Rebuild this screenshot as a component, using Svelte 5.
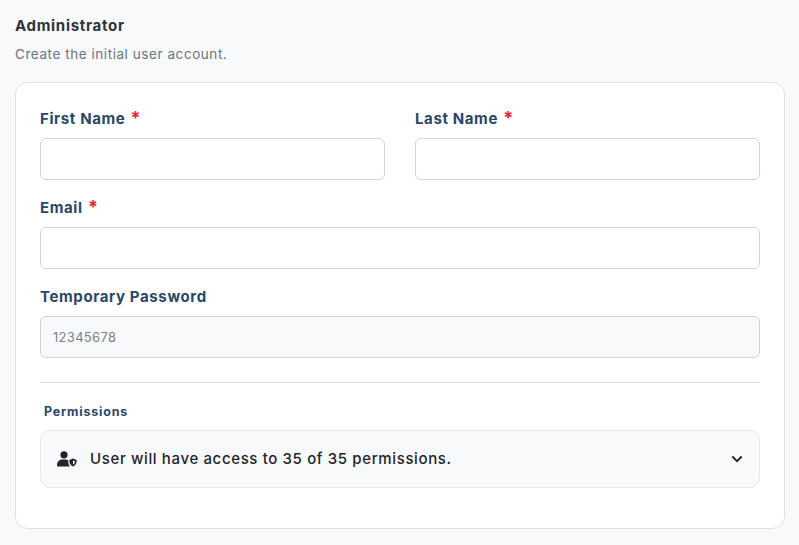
<script lang="ts">
  const nameFields = ['First Name', 'Last Name'];
</script>

<div class="page">
  <h2>Administrator</h2>
  <p class="sub">Create the initial user account.</p>

  <section class="card">
    <div class="two">
      {#each nameFields as label}
        <div class="field">
          <label>{label} <span class="req">*</span></label>
          <input type="text" />
        </div>
      {/each}
    </div>

    <div class="field">
      <label>Email <span class="req">*</span></label>
      <input type="text" />
    </div>

    <div class="field">
      <label>Temporary Password</label>
      <input class="disabled" type="text" value="12345678" readonly />
    </div>

    <hr />

    <div class="perm-label">Permissions</div>
    <div class="perm">
      <svg class="user" viewBox="0 0 20 16" width="20" height="16" aria-hidden="true">
        <circle cx="7" cy="3.8" r="3.6" fill="#212529" />
        <path d="M0 14.2C0 10.6 2.6 8.6 5.6 8.6h2.8c1 0 2 .2 2.8.7-.2 1.9.2 4.300 1.700 6.200H1.200C.5 15.500 0 15 0 14.200z" fill="#212529" />
        <path d="M16 7.600l3.700 1.400c.1 3-1.100 5.500-3.700 6.600-2.600-1.100-3.800-3.600-3.700-6.600z" fill="#212529" />
        <path d="M16 9.600l1.900.7c-.1 1.500-.7 2.700-1.900 3.400z" fill="#f8f9fa" />
      </svg>
      <span class="perm-text">User will have access to 35 of 35 permissions.</span>
      <svg class="chev" viewBox="0 0 12 8" width="12" height="8" aria-hidden="true">
        <path d="M1.300 1.500L6 6.200l4.700-4.700" fill="none" stroke="#212529" stroke-width="1.900" />
      </svg>
    </div>
  </section>
</div>

<style>
  :global(body) {
    margin: 0;
    background: #f8f9fb;
    font-family: Inter, "Open Sans", sans-serif;
  }

  .page {
    height: 545px;
    padding: 16px 14px 0 15px;
    box-sizing: border-box;
    overflow: hidden;
  }

  h2 {
    margin: 0;
    font-size: 15px;
    line-height: 20px;
    font-weight: 700;
    letter-spacing: 0.7px;
    color: #2f3438;
  }

  .sub {
    margin: 9px 0 0;
    font-size: 13.500px;
    line-height: 18px;
    letter-spacing: 0.56px;
    color: #6c757d;
  }

  .card {
    margin-top: 19px;
    height: 447px;
    box-sizing: border-box;
    padding: 25px 24px 0;
    background: #fff;
    border: 1px solid #dee2e6;
    border-radius: 12px;
  }

  .two {
    display: grid;
    grid-template-columns: 345px 345px;
    gap: 30px;
  }

  .field {
    margin-bottom: 17px;
  }

  label {
    display: block;
    height: 20px;
    margin-bottom: 10px;
    font-size: 15px;
    line-height: 22px;
    font-weight: 700;
    letter-spacing: 0.62px;
    color: #2c4766;
  }

  .req {
    margin-left: 1px;
    font-size: 18px;
    line-height: 18px;
    color: #e8213f;
  }

  input {
    display: block;
    width: 100%;
    height: 42px;
    box-sizing: border-box;
    padding: 0 12px;
    background: #fff;
    border: 1px solid #ced4da;
    border-radius: 6px;
    font-family: inherit;
    font-size: 13px;
    letter-spacing: 0.3px;
    color: #7b8289;
    outline: none;
  }

  input.disabled {
    background: #f8f9fa;
  }

  hr {
    margin: 24px 0 0;
    border: 0;
    border-top: 1px solid #dee2e6;
  }

  .perm-label {
    margin: 20px 0 0 4px;
    font-size: 12.500px;
    line-height: 17px;
    font-weight: 700;
    letter-spacing: 0.8px;
    color: #2c4766;
  }

  .perm {
    display: flex;
    align-items: center;
    height: 58px;
    margin-top: 10px;
    box-sizing: border-box;
    padding: 0 16px;
    background: #f8f9fa;
    border: 1px solid #e4e7eb;
    border-radius: 10px;
  }

  .user {
    margin-right: 13px;
    flex: none;
  }

  .perm-text {
    flex: 1;
    margin-top: -2px;
    font-size: 15px;
    letter-spacing: 0.63px;
    font-weight: 500;
    color: #212529;
  }

  .chev {
    flex: none;
  }
</style>
